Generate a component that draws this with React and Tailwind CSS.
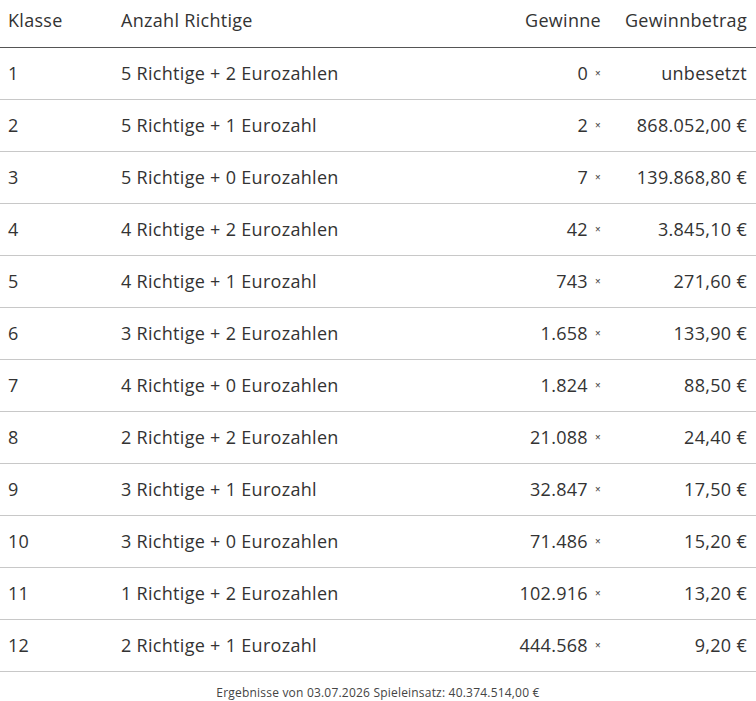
const rows = [
  ['1', '5 Richtige + 2 Eurozahlen', '0', 'unbesetzt'],
  ['2', '5 Richtige + 1 Eurozahl', '2', '868.052,00 €'],
  ['3', '5 Richtige + 0 Eurozahlen', '7', '139.868,80 €'],
  ['4', '4 Richtige + 2 Eurozahlen', '42', '3.845,10 €'],
  ['5', '4 Richtige + 1 Eurozahl', '743', '271,60 €'],
  ['6', '3 Richtige + 2 Eurozahlen', '1.658', '133,90 €'],
  ['7', '4 Richtige + 0 Eurozahlen', '1.824', '88,50 €'],
  ['8', '2 Richtige + 2 Eurozahlen', '21.088', '24,40 €'],
  ['9', '3 Richtige + 1 Eurozahl', '32.847', '17,50 €'],
  ['10', '3 Richtige + 0 Eurozahlen', '71.486', '15,20 €'],
  ['11', '1 Richtige + 2 Eurozahlen', '102.916', '13,20 €'],
  ['12', '2 Richtige + 1 Eurozahl', '444.568', '9,20 €'],
];

export default function App() {
  return (
    <div className="w-[756px] min-h-[701px] bg-white text-[#333] font-['Open_Sans',sans-serif]">
      <table className="w-full table-fixed border-collapse text-[18px] tracking-[0.3px]">
        <colgroup>
          <col className="w-[121px]" />
          <col />
          <col className="w-[130px]" />
          <col className="w-[155px]" />
        </colgroup>
        <thead>
          <tr className="h-[47px] border-b border-[#555]">
            <th className="pl-2 pb-[6px] text-left font-normal">Klasse</th>
            <th className="pb-[6px] text-left font-normal">Anzahl Richtige</th>
            <th className="pb-[6px] text-right font-normal">Gewinne</th>
            <th className="pr-[9px] pb-[6px] text-right font-normal">Gewinnbetrag</th>
          </tr>
        </thead>
        <tbody>
          {rows.map((r) => (
            <tr key={r[0]} className="h-[52px] border-b border-[#c8c8c8]">
              <td className="pl-2">{r[0]}</td>
              <td>{r[1]}</td>
              <td className="text-right">
                {r[2]}
                <span className="relative -top-[3px] ml-[7px] text-[10px] font-semibold text-[#555]">×</span>
              </td>
              <td className="pr-[9px] text-right">{r[3]}</td>
            </tr>
          ))}
        </tbody>
      </table>
      <p className="pt-3 text-center text-[12px] tracking-[0.2px] text-[#444]">
        Ergebnisse von 03.07.2026 Spieleinsatz: 40.374.514,00 €
      </p>
    </div>
  );
}
